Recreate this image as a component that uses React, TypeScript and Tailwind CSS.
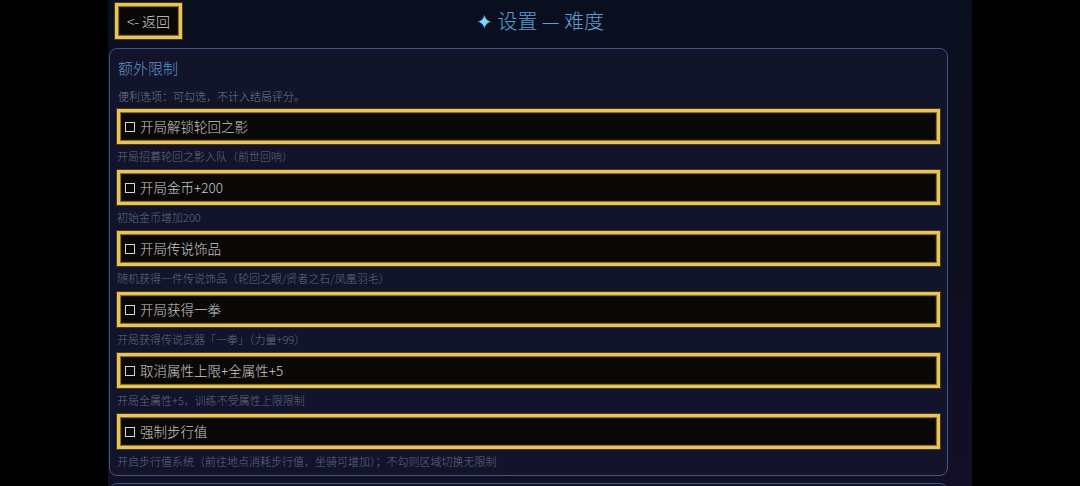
const FONT = "font-['Noto_Sans_CJK_SC','Noto_Sans',sans-serif]"

const OPTIONS = [
  { label: '开局解锁轮回之影', desc: '开局招募轮回之影入队（前世回响）' },
  { label: '开局金币+200', desc: '初始金币增加200' },
  { label: '开局传说饰品', desc: '随机获得一件传说饰品（轮回之眼/贤者之石/凤凰羽毛）' },
  { label: '开局获得一拳', desc: '开局获得传说武器「一拳」（力量+99）' },
  { label: '取消属性上限+全属性+5', desc: '开局全属性+5，训练不受属性上限限制' },
  { label: '强制步行值', desc: '开启步行值系统（前往地点消耗步行值，坐骑可增加）；不勾则区域切换无限制' },
]

// gold framed button used across menus
function GoldFrame({ className, children }: { className?: string; children: React.ReactNode }) {
  return (
    <div
      className={`border-[3px] border-[#e6c55e] bg-[#0a0807] shadow-[inset_0_0_0_1px_#8a6c22,inset_0_0_0_2px_#1a1408,0_0_0_1px_#4a3a12] ${className ?? ''}`}
    >
      {children}
    </div>
  )
}

function OptionRow({ label, desc }: { label: string; desc: string }) {
  return (
    <div className="flex flex-col">
      <GoldFrame className="h-[35px] flex items-center pl-[5px]">
        <span className="w-[10px] h-[10px] border-[1.5px] border-[#d6d6d6] mr-[5px]" />
        <span className="text-[13.5px] font-light leading-none text-[#cbcbcb]">{label}</span>
      </GoldFrame>
      <p className="mt-[5px] mb-[7px] text-[11px] font-light leading-[14px] text-[#646a7e]">{desc}</p>
    </div>
  )
}

export default function App() {
  return (
    <div className={`w-[1080px] h-[486px] overflow-hidden bg-black ${FONT}`}>
      <div className="ml-[108px] w-[864px] h-full bg-gradient-to-b from-[#0a0f1f] via-[#0c0f20] to-[#120f26] flex flex-col">
        {/* header */}
        <div className="relative h-[48px] shrink-0 flex items-start">
          <GoldFrame className="mt-[3px] ml-[7px] w-[67px] h-[36px] flex items-center justify-center">
            <span className="text-[14px] font-light text-[#cfcfcf] leading-none">&lt;- 返回</span>
          </GoldFrame>
          <h1 className="absolute left-0 right-0 top-[8px] text-center text-[20px] font-light leading-[26px] text-[#5b9fd4]">
            <span className="text-[#7dd3fc]">✦</span> 设置 — 难度
          </h1>
        </div>

        {/* extra restrictions panel */}
        <div className="shrink-0 ml-[1px] mr-[24px] rounded-[8px] border border-[#435682] bg-[#11142a] pt-[9px] px-[7px]">
          <h2 className="ml-[1px] text-[15px] font-light leading-[20px] text-[#5b93c6]">额外限制</h2>
          <p className="ml-[1px] mt-[11px] mb-[6px] text-[11px] font-light leading-[14px] text-[#767d90]">
            便利选项：可勾选，不计入结局评分。
          </p>
          <div className="flex flex-col">
            {OPTIONS.map((o) => (
              <OptionRow key={o.label} label={o.label} desc={o.desc} />
            ))}
          </div>
        </div>

        <div className="shrink-0 mt-[7px] ml-[1px] mr-[24px] h-[20px] rounded-t-[8px] border border-[#435682] bg-[#11142a]" />
      </div>
    </div>
  )
}
